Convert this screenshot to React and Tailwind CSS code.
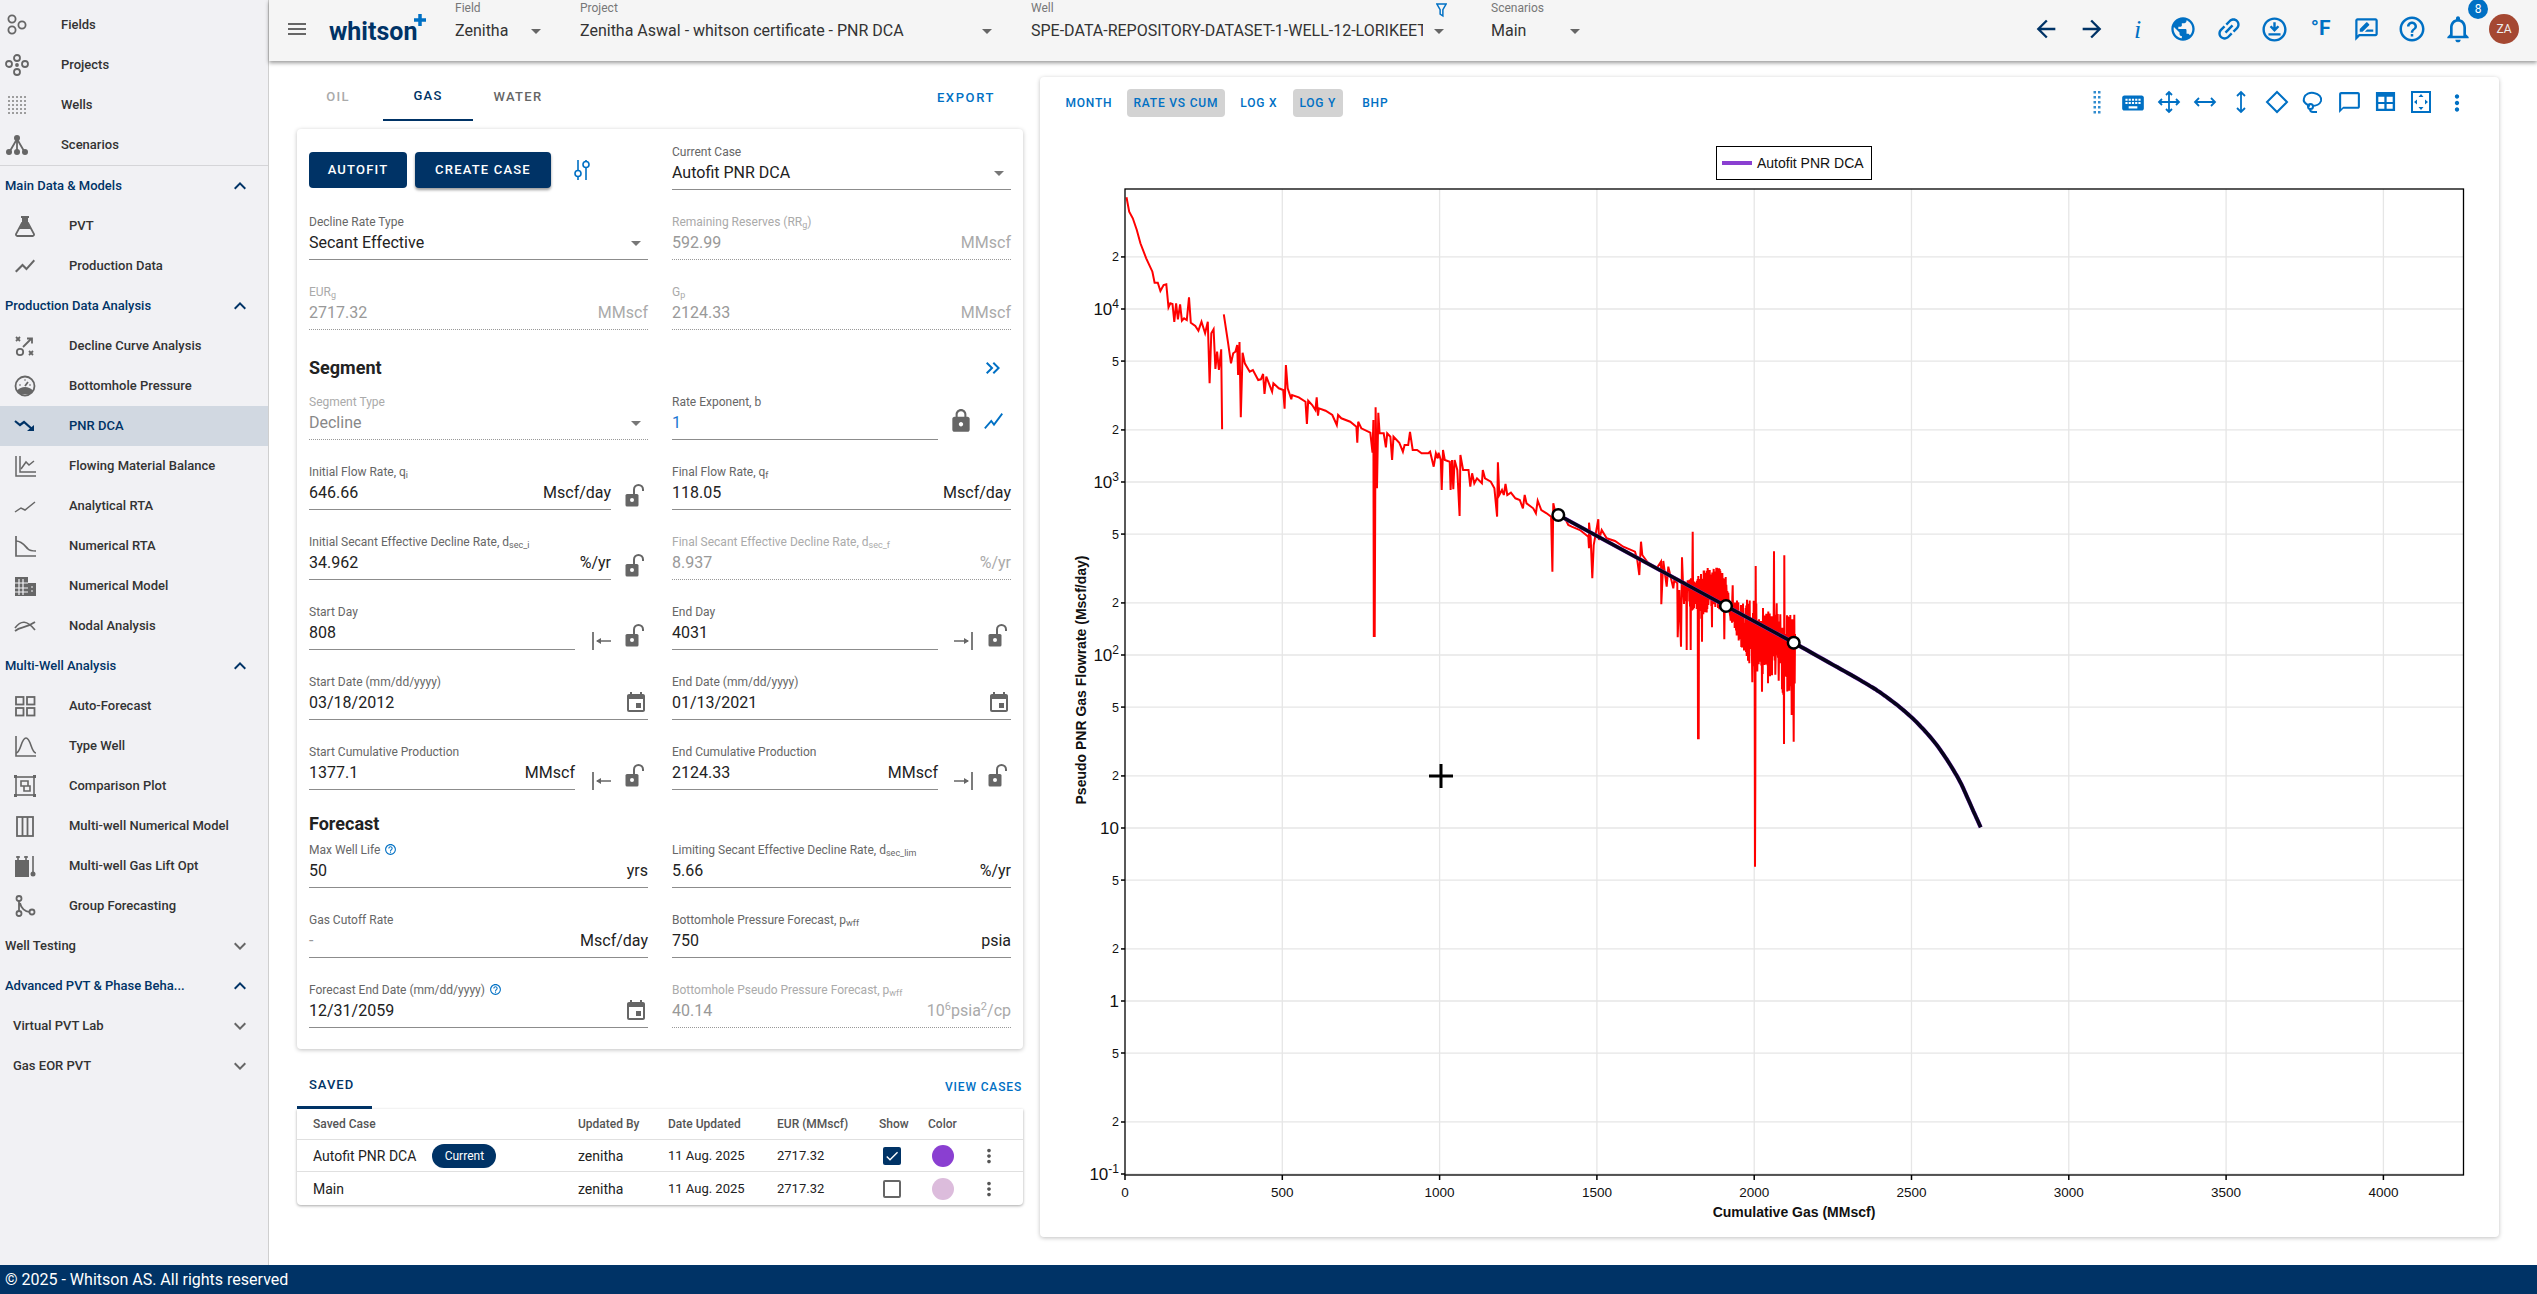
import React from "react";
import {
  MdArrowBack, MdArrowForward, MdPublic, MdLink, MdOutlineDownloadForOffline, MdOutlineRateReview,
  MdHelpOutline, MdNotificationsNone, MdMoreVert, MdKeyboard, MdChatBubbleOutline,
  MdEvent, MdLock, MdKeyboardDoubleArrowRight, MdExpandLess, MdExpandMore, MdArrowDropDown,
  MdMenu, MdShowChart, MdCheck,
} from "react-icons/md";

const Ico = ({ children, className = "" }) => (
  <svg viewBox="0 0 24 24" width="24" height="24" fill="none" stroke="currentColor" strokeWidth="1.8" className={className}>
    {children}
  </svg>
);

// sidebar icons
const icons = {
  fields: <Ico><circle cx="7" cy="6" r="3.6" /><circle cx="7" cy="17" r="3.6" /><circle cx="17" cy="12" r="3.6" /></Ico>,
  projects: <Ico><circle cx="12" cy="5" r="3" /><circle cx="12" cy="19" r="3" /><circle cx="4" cy="11" r="3" /><circle cx="20" cy="11" r="3" /><circle cx="12" cy="12" r="1" /></Ico>,
  wells: (
    <Ico>
      <g fill="currentColor" stroke="none" opacity="0.75">
        {[4, 8, 12, 16, 20].map((x) => [4, 8, 12, 16, 20].map((y) => <rect key={x + "-" + y} x={x - 0.9} y={y - 0.9} width="1.8" height="1.8" />))}
      </g>
    </Ico>
  ),
  scenarios: (
    <Ico>
      <path d="M12 6 5 18M12 6l7 12M12 6v12" />
      <g fill="currentColor" stroke="none"><circle cx="12" cy="5" r="3" /><circle cx="4" cy="19" r="3" /><circle cx="12" cy="19" r="3" /><circle cx="20" cy="19" r="3" /></g>
    </Ico>
  ),
  pvt: (
    <Ico>
      <path d="M9 9 3 20a1.500 1.500 0 0 0 1.300 2h15.400a1.500 1.500 0 0 0 1.300-2L15 9z" />
      <path d="M8 2h8v2h-1v6l3 5H6l3-5V4H8z" fill="currentColor" stroke="none" />
    </Ico>
  ),
  prod: <MdShowChart size={26} />,
  dca: (
    <Ico>
      <path d="m3 3 4 4M7 3 3 7M16 17l4 4M20 17l-4 4M10 13l8-8M14 4.500h5v5" />
      <circle cx="7" cy="18" r="3.2" />
    </Ico>
  ),
  bhp: (
    <Ico>
      <circle cx="12" cy="12" r="9.500" />
      <path d="M4 17c2-3 5-4 8-4s6 1 8 4l-3 3H7z" fill="currentColor" stroke="none" />
      <path d="m12 12 3-4M6.500 11h1M16.500 11h1M12 5.500v1" />
    </Ico>
  ),
  pnr: <Ico><path d="m2 7 5 4 4-3 8 7" strokeWidth="2.2" /><path d="M14 17h7v-6z" fill="currentColor" stroke="none" /></Ico>,
  fmb: <Ico><path d="M3 2v20h20M7 2v16h16" strokeWidth="1.5" /><path d="m8 15 5-7 3 3 5-4" strokeWidth="1.5" /></Ico>,
  art: <Ico><path d="m2 18 6-4 4 2 10-8" strokeWidth="1.5" /></Ico>,
  nrta: <Ico><path d="M3 2v20h20" strokeWidth="1.7" /><path d="M3 7c6 0 9 5 12 8 2 2 5 2 8 2" strokeWidth="1.7" /></Ico>,
  model: (
    <Ico>
      <path d="M2 3h13v19H2zM15 9h8v13h-8z" fill="currentColor" stroke="none" />
      <path d="M6 5v16M10 5v16M2 9h13M2 14h13M2 18h13M18 13h2M18 17h2" stroke="#f1f1f4" strokeWidth="1.2" />
    </Ico>
  ),
  nodal: <Ico><path d="M2 14c6-8 12-8 20 2M2 17c6-5 10-2 20-9" strokeWidth="1.7" /></Ico>,
  auto: <Ico><rect x="3" y="3" width="7.500" height="7.500" /><rect x="14" y="3" width="7.500" height="7.500" /><rect x="3" y="14" width="7.500" height="7.500" /><rect x="14" y="14" width="7.500" height="7.500" /></Ico>,
  type: <Ico><path d="M3 2v20h20" strokeWidth="1.6" /><path d="M3 19c5 0 5-15 10-15s5 15 10 15" strokeWidth="1.6" /></Ico>,
  comp: (
    <Ico>
      <rect x="3" y="3" width="18" height="18" strokeWidth="1.6" />
      <path d="M8 7h7v5H8zM11 12h6v5h-6z" strokeWidth="1.6" />
      <g fill="currentColor" stroke="none"><rect x="1" y="1" width="3" height="3" /><rect x="20" y="1" width="3" height="3" /><rect x="1" y="20" width="3" height="3" /><rect x="20" y="20" width="3" height="3" /></g>
    </Ico>
  ),
  mwnm: <Ico><rect x="4" y="3" width="16" height="19" /><path d="M9.500 3v19M14.500 3v19" /></Ico>,
  gaslift: (
    <Ico>
      <path d="M2 6h14v17H2z" fill="currentColor" stroke="none" />
      <path d="M5 2v5M13 2v5M3 3h4M11 3h4M20 2v16" strokeWidth="1.6" />
      <circle cx="20" cy="20" r="2.500" fill="currentColor" stroke="none" />
    </Ico>
  ),
  group: <Ico><circle cx="6" cy="4.500" r="2.500" /><circle cx="6" cy="19.500" r="2.500" /><circle cx="19" cy="18" r="2.500" /><path d="M6 7v10M7 9c1 5 5 9 10 9" /></Ico>,
};

const Nav = ({ icon, label, sub, active }) => (
  <div className={`flex h-10 items-center ${sub ? "pl-[13px]" : "pl-[5px]"} ${active ? "bg-[#d1d8e1] text-[#003366]" : "text-[#333]"}`}>
    <span className={`flex w-6 justify-center ${active ? "text-[#003366]" : "text-[#666]"}`}>{icons[icon]}</span>
    <span className="ml-8 text-[13px] font-medium whitespace-nowrap">{label}</span>
  </div>
);

const Group = ({ label, open, inset }) => (
  <div className={`flex h-10 items-center justify-between pr-4 ${inset ? "pl-[13px]" : "pl-[5px]"} ${open ? "text-[#003366]" : "text-[#333]"}`}>
    <span className="text-[13px] font-medium whitespace-nowrap">{label}</span>
    {open ? <MdExpandLess size={24} className="text-[#003366]" /> : <MdExpandMore size={24} className="text-[#666]" />}
  </div>
);

function Sidebar() {
  return (
    <div className="h-full w-[269px] shrink-0 border-r border-[#cfcfcf] bg-[#f1f1f4] pt-[5px]">
      <Nav icon="fields" label="Fields" />
      <Nav icon="projects" label="Projects" />
      <Nav icon="wells" label="Wells" />
      <Nav icon="scenarios" label="Scenarios" />
      <div className="border-t border-[#d5d5d8]" />
      <Group label="Main Data & Models" open />
      <Nav sub icon="pvt" label="PVT" />
      <Nav sub icon="prod" label="Production Data" />
      <Group label="Production Data Analysis" open />
      <Nav sub icon="dca" label="Decline Curve Analysis" />
      <Nav sub icon="bhp" label="Bottomhole Pressure" />
      <Nav sub active icon="pnr" label="PNR DCA" />
      <Nav sub icon="fmb" label="Flowing Material Balance" />
      <Nav sub icon="art" label="Analytical RTA" />
      <Nav sub icon="nrta" label="Numerical RTA" />
      <Nav sub icon="model" label="Numerical Model" />
      <Nav sub icon="nodal" label="Nodal Analysis" />
      <Group label="Multi-Well Analysis" open />
      <Nav sub icon="auto" label="Auto-Forecast" />
      <Nav sub icon="type" label="Type Well" />
      <Nav sub icon="comp" label="Comparison Plot" />
      <Nav sub icon="mwnm" label="Multi-well Numerical Model" />
      <Nav sub icon="gaslift" label="Multi-well Gas Lift Opt" />
      <Nav sub icon="group" label="Group Forecasting" />
      <Group label="Well Testing" />
      <Group label="Advanced PVT & Phase Beha..." open />
      <Group inset label="Virtual PVT Lab" />
      <Group inset label="Gas EOR PVT" />
    </div>
  );
}

const TopSelect = ({ label, value, width }) => (
  <div className={`shrink-0 ${width}`}>
    <div className="h-4 text-xs leading-4 text-[#777]">{label}</div>
    <div className="mt-[3px] flex h-6 items-center text-[#333]">
      <span className="flex-1 overflow-hidden text-base whitespace-nowrap">{value}</span>
      <MdArrowDropDown size={24} className="ml-1 shrink-0 text-[#666]" />
    </div>
  </div>
);

const TopIcon = ({ children, dark }) => (
  <span className={`flex h-8 w-[45.800px] items-center justify-center ${dark ? "text-[#003366]" : "text-[#0070c4]"}`}>{children}</span>
);

function TopBar() {
  return (
    <div className="relative z-10 flex h-[61px] shrink-0 bg-[#f5f5f5] shadow-[0_2px_4px_rgba(0,0,0,0.4)]">
      <MdMenu size={24} className="mt-[17px] ml-[16px] shrink-0 text-[#666]" />
      <div className="relative mt-[16px] ml-[20px] w-[106px] shrink-0 text-[25px] leading-8 font-bold text-[#003366]">
        whitson
        <svg viewBox="0 0 12 12" width="12" height="12" className="absolute top-[-2px] left-[85px]">
          <path d="M4.250 0h3.500v4.250H12v3.500H7.750V12h-3.500V7.750H0v-3.500h4.250z" fill="#0070c4" />
        </svg>
      </div>
      <div className="ml-[20px] flex gap-8 pt-0">
        <TopSelect label="Field" value="Zenitha" width="w-[93px]" />
        <TopSelect label="Project" value="Zenitha Aswal - whitson certificate - PNR DCA" width="w-[419px]" />
        <div className="relative">
          <TopSelect label="Well" value="SPE-DATA-REPOSITORY-DATASET-1-WELL-12-LORIKEET" width="w-[420px]" />
          <svg viewBox="0 0 12 16" width="11" height="15" className="absolute top-[3px] left-[405px]" fill="none" stroke="#0070c4" strokeWidth="1.6">
            <path d="M1 1h10L7.500 7v7l-3-2V7z" />
          </svg>
        </div>
        <div className="ml-2"><TopSelect label="Scenarios" value="Main" width="w-[96px]" /></div>
      </div>
      <div className="ml-auto flex items-start pt-[13px] pr-[18px]">
        <TopIcon dark><MdArrowBack size={28} /></TopIcon>
        <TopIcon dark><MdArrowForward size={28} /></TopIcon>
        <TopIcon><span className="font-['Liberation_Serif'] text-[26px] italic">i</span></TopIcon>
        <TopIcon><MdPublic size={28} /></TopIcon>
        <TopIcon><MdLink size={30} className="-rotate-45" /></TopIcon>
        <TopIcon><MdOutlineDownloadForOffline size={29} /></TopIcon>
        <TopIcon><span className="text-[21px] font-bold">°F</span></TopIcon>
        <TopIcon><MdOutlineRateReview size={27} /></TopIcon>
        <TopIcon><MdHelpOutline size={30} /></TopIcon>
        <span className="relative">
          <TopIcon><MdNotificationsNone size={32} /></TopIcon>
          <span className="absolute top-[-14px] left-[33px] flex h-5 w-5 items-center justify-center rounded-full bg-[#0070c4] text-xs text-white">8</span>
        </span>
        <span className="mt-[1px] ml-2 flex h-[30px] w-[30px] items-center justify-center rounded-full bg-[#a54832] text-xs text-[#eee]">ZA</span>
      </div>
    </div>
  );
}

// shackle swings out to the right, like the app's unlocked icon
const OpenLock = () => (
  <svg viewBox="0 0 24 24" width="24" height="24" className="text-[#666]">
    <path d="M5 11h10a1.500 1.500 0 0 1 1.500 1.500V22a1.500 1.500 0 0 1-1.500 1.500H5A1.500 1.500 0 0 1 3.500 22v-9.500A1.500 1.500 0 0 1 5 11z" fill="currentColor" />
    <circle cx="10" cy="17" r="2" fill="#fff" />
    <path d="M12 11V6.500a4.500 4.500 0 0 1 9 0V8" fill="none" stroke="currentColor" strokeWidth="2" />
  </svg>
);

const ToStart = () => (
  <svg viewBox="0 0 24 24" width="24" height="24" fill="none" stroke="#666" strokeWidth="1.7">
    <path d="M4 3v18M22 12H8" />
    <path d="M12 9 7 12l5 3z" fill="#666" stroke="none" />
  </svg>
);
const ToEnd = () => (
  <svg viewBox="0 0 24 24" width="24" height="24" fill="none" stroke="#666" strokeWidth="1.7">
    <path d="M20 3v18M2 12h14" />
    <path d="m12 9 5 3-5 3z" fill="#666" stroke="none" />
  </svg>
);

const Hint = () => <MdHelpOutline size={13} className="ml-1 inline-block -translate-y-[1px] text-[#0070c4]" />;

function Field({ label, value, unit, off, select, date, arrow, lock, dim, blue, trend }) {
  return (
    <div className="mb-6 flex h-[46px] w-[339px]">
      <div className="min-w-0 flex-1">
        <div className={`h-4 text-xs leading-4 whitespace-nowrap ${off ? "text-[#aaa]" : "text-[#666]"}`}>{label}</div>
        <div className={`flex h-[30px] items-center border-b pb-1 text-base ${off ? "border-dotted border-[#999] text-[#999]" : "border-[#8c8c8c] text-[#222]"}`}>
          <span className={`flex-1 ${blue ? "text-[#1976d2]" : ""} ${dim ? "text-[#999]" : ""} ${off && select ? "text-[#888]" : ""}`}>{value}</span>
          {unit && <span className={off ? "text-[#aaa]" : ""}>{unit}</span>}
          {select && <MdArrowDropDown size={24} className="text-[#777]" />}
          {date && <MdEvent size={24} className="text-[#666]" />}
        </div>
      </div>
      {trend ? (
        <div className="flex items-end pr-[6px] pb-[6px]">
          <MdLock size={26} className="ml-[10px] text-[#666]" />
          <svg viewBox="0 0 24 24" width="22" height="22" fill="none" stroke="#0070c4" strokeWidth="2" className="mb-[2px] ml-[9px]">
            <path d="m2 20 7-8 3 4 9-12" />
          </svg>
        </div>
      ) : arrow ? (
        <div className="flex items-end pr-[2px]">
          <span className="mb-[-3px] ml-[14px]">{arrow === "start" ? <ToStart /> : <ToEnd />}</span>
          <span className="mb-[3px] ml-[9px]"><OpenLock /></span>
        </div>
      ) : lock ? (
        <div className="flex items-end pr-[2px]">
          <span className="mb-[3px] ml-[11px]"><OpenLock /></span>
        </div>
      ) : null}
    </div>
  );
}

const S = ({ children }) => <sub className="text-[9px]">{children}</sub>;

function FitCard() {
  return (
    <div className="rounded bg-white px-3 pt-[15px] pb-[21px] shadow-[0_1px_4px_rgba(0,0,0,0.25)]">
      <div className="flex gap-6">
        <div className="mb-6 flex h-[46px] w-[339px] items-start gap-2 pt-2">
          <button className="h-9 w-[98px] rounded bg-[#003366] text-[13px] font-medium tracking-[1.2px] text-white">AUTOFIT</button>
          <button className="h-9 w-[136px] rounded bg-[#003366] text-[13px] font-medium tracking-[1.2px] text-white shadow-[0_2px_3px_rgba(0,0,0,0.4)]">CREATE CASE</button>
          <svg viewBox="0 0 20 24" width="20" height="24" fill="none" stroke="#0070c4" strokeWidth="1.6" className="mt-[6px] ml-[13px]">
            <path d="M6 2v10M6 19v3M14 2v1M14 10v12" />
            <circle cx="6" cy="15.500" r="3" />
            <circle cx="14" cy="6.500" r="3" />
          </svg>
        </div>
        <Field label="Current Case" value="Autofit PNR DCA" select />
      </div>
      <div className="grid grid-cols-[339px_339px] gap-x-6">
        <Field label="Decline Rate Type" value="Secant Effective" select />
        <Field off label={<>Remaining Reserves (RR<S>g</S>)</>} value="592.99" unit="MMscf" />
        <Field off label={<>EUR<S>g</S></>} value="2717.32" unit="MMscf" />
        <Field off label={<>G<S>p</S></>} value="2124.33" unit="MMscf" />
      </div>
      <div className="flex h-7 items-center justify-between">
        <span className="text-lg font-bold text-[#222]">Segment</span>
        <MdKeyboardDoubleArrowRight size={24} className="mr-[6px] text-[#0070c4]" />
      </div>
      <div className="mt-3 grid grid-cols-[339px_339px] gap-x-6">
        <Field off select label="Segment Type" value="Decline" />
        <Field trend blue label="Rate Exponent, b" value="1" />
        <Field lock label={<>Initial Flow Rate, q<S>i</S></>} value="646.66" unit="Mscf/day" />
        <Field label={<>Final Flow Rate, q<S>f</S></>} value="118.05" unit="Mscf/day" />
        <Field lock label={<>Initial Secant Effective Decline Rate, d<S>sec_i</S></>} value="34.962" unit="%/yr" />
        <Field off label={<>Final Secant Effective Decline Rate, d<S>sec_f</S></>} value="8.937" unit="%/yr" />
        <Field arrow="start" label="Start Day" value="808" />
        <Field arrow="end" label="End Day" value="4031" />
        <Field date label="Start Date (mm/dd/yyyy)" value="03/18/2012" />
        <Field date label="End Date (mm/dd/yyyy)" value="01/13/2021" />
        <Field arrow="start" label="Start Cumulative Production" value="1377.1" unit="MMscf" />
        <Field arrow="end" label="End Cumulative Production" value="2124.33" unit="MMscf" />
      </div>
      <div className="mb-2 flex h-5 items-center text-lg font-bold text-[#222]">Forecast</div>
      <div className="grid grid-cols-[339px_339px] gap-x-6">
        <Field label={<>Max Well Life<Hint /></>} value="50" unit="yrs" />
        <Field label={<>Limiting Secant Effective Decline Rate, d<S>sec_lim</S></>} value="5.66" unit="%/yr" />
        <Field dim label="Gas Cutoff Rate" value="-" unit="Mscf/day" />
        <Field label={<>Bottomhole Pressure Forecast, p<S>wff</S></>} value="750" unit="psia" />
        <div className="-mb-6"><Field date label={<>Forecast End Date (mm/dd/yyyy)<Hint /></>} value="12/31/2059" /></div>
        <div className="-mb-6">
          <Field off label={<>Bottomhole Pseudo Pressure Forecast, p<S>wff</S></>} value="40.14" unit={<>10<sup className="text-[11px]">6</sup>psia<sup className="text-[11px]">2</sup>/cp</>} />
        </div>
      </div>
    </div>
  );
}

const tableCols = "grid grid-cols-[281px_90px_109px_102px_49px_50px_1fr] items-center";

function SavedRow({ name, current, on, color, tall }) {
  return (
    <div className={`${tableCols} ${tall ? "h-[33px]" : "h-8 border-b border-[#e0e0e0]"} text-[#222]`}>
      <div className="flex items-center pl-4 text-sm">
        {name}
        {current && <span className="ml-4 flex h-6 w-16 items-center justify-center rounded-full bg-[#003366] text-xs text-white">Current</span>}
      </div>
      <div className="text-sm">zenitha</div>
      <div className="text-[13px]">11 Aug. 2025</div>
      <div className="text-[13px]">2717.32</div>
      <div className="pl-1">
        {on ? (
          <span className="flex h-[18px] w-[18px] items-center justify-center rounded-[2px] bg-[#003366] text-white"><MdCheck size={16} /></span>
        ) : (
          <span className="block h-[18px] w-[18px] rounded-[2px] border-2 border-[#666]" />
        )}
      </div>
      <div className="pl-1"><span className={`block h-[22px] w-[22px] rounded-full ${color}`} /></div>
      <div className="text-[#555]"><MdMoreVert size={22} /></div>
    </div>
  );
}

function SavedTable() {
  return (
    <>
      <div className="mt-3 flex h-12 items-end justify-between">
        <div className="flex h-12 w-[75px] items-center border-b-[3px] border-[#003366] pt-[3px] pl-3 text-[13px] font-medium tracking-[1px] text-[#003366]">SAVED</div>
        <div className="mr-[1px] mb-[14px] text-xs font-medium tracking-[0.85px] text-[#0070c4]">VIEW CASES</div>
      </div>
      <div className="rounded-b bg-white shadow-[0_1px_3px_rgba(0,0,0,0.35)]">
        <div className={`${tableCols} h-[31px] border-b border-[#e0e0e0] text-xs font-medium text-[#555]`}>
          <div className="pl-4">Saved Case</div>
          <div>Updated By</div>
          <div>Date Updated</div>
          <div>EUR (MMscf)</div>
          <div>Show</div>
          <div>Color</div>
          <div />
        </div>
        <SavedRow current on name="Autofit PNR DCA" color="bg-[#8a3fd1]" />
        <SavedRow tall name="Main" color="bg-[#dcbcdc]" />
      </div>
    </>
  );
}

// chart scales, in page pixels
const X = (v) => 1125 + v * 0.3146;
const Y = (lg) => 309 + (4 - lg) * 173;

// traced from the plot
const upper = [[149,82],[155,125],[163,145],[172,180],[180,220],[193,265],[207,305],[212,338],[219,338],[225,363],[232,345],[238,343],[243,412],[247,400],[252,402],[256,456],[260,400],[264,448],[269,403],[273,452],[278,445],[284,450],[289,382],[293,458],[303,468],[310,482],[317,455],[325,490],[331,455],[335,640],[339,490],[344,478],[348,597],[352,545],[356,600],[361,538],[363,778]];
const middle = [[367,433],[376,515],[383,580],[388,550],[393,545],[397,525],[399,615],[402,516],[405,742],[409,548],[414,580],[425,605],[432,600],[444,630],[450,628],[455,612],[458,672],[462,620],[468,640],[475,665],[478,640],[490,655],[500,660],[503,716],[506,585],[510,655],[518,688],[520,675],[535,682],[550,695],[553,762],[556,692],[565,705],[572,720],[575,682],[578,737],[580,715],[595,722],[610,735],[620,765],[623,735],[630,745],[650,755],[664,770],[666,818],[668,755],[675,775],[695,788],[700,848],[702,750],[703,1398],[705,1398],[707,712],[710,955],[713,728],[716,790],[725,790],[730,832],[733,790],[740,800],[744,870],[747,800],[760,818],[768,845],[772,825],[780,825],[784,786],[790,840],[800,840],[810,850],[825,850],[829,845],[837,890],[842,850],[846,865],[848,848],[853,870],[855,960],[858,840],[862,870],[873,875],[875,960],[878,870],[881,958],[884,870],[890,900],[895,1038],[897,855],[903,900],[915,900],[919,950],[923,910],[928,940],[934,925],[945,940],[947,900],[952,925],[965,935],[973,955],[979,1040],[981,877],[984,975],[990,960],[994,975],[998,942],[1002,975],[1010,968],[1020,985],[1030,990],[1037,1015],[1041,975],[1045,1000],[1060,1015],[1066,1030],[1070,992],[1078,1020],[1090,1030],[1100,1040],[1103,1205],[1105,1000],[1110,1030],[1117,1035]];
const lower = [[175,105],[195,115],[205,135],[215,140],[240,150],[265,170],[267,205],[267,128],[272,175],[277,295],[281,195],[295,118],[297,180],[305,150],[320,175],[345,183],[370,200],[405,215],[412,240],[418,285],[423,185],[427,225],[445,250],[470,265],[483,245],[484,373],[490,243],[500,320],[505,260],[520,325],[523,300],[532,310],[533,472],[538,330],[543,500],[546,232],[550,335]];

const lerp = (tbl, p) => {
  for (let i = 1; i < tbl.length; i++) {
    if (p <= tbl[i][0]) {
      const t = (p - tbl[i - 1][0]) / (tbl[i][0] - tbl[i - 1][0]);
      return tbl[i - 1][1] + t * (tbl[i][1] - tbl[i - 1][1]);
    }
  }
  return tbl[tbl.length - 1][1];
};
const noiseTop = [[550,300],[600,285],[620,260],[650,255],[680,295],[690,340],[720,370],[750,350],[780,380],[830,400],[885,405]];
const noiseBottom = [[550,370],[600,420],[640,380],[680,400],[700,440],[730,520],[760,570],[800,590],[830,590],[850,650],[885,620]];
const spikes = { 560: 510, 572: 510, 578: 155, 594: 778, 596: 778, 606: 485, 636: 442, 673: 478, 698: 316, 757: 607, 765: 1160, 766: 920, 767: 258, 786: 635, 804: 610, 822: 214, 830: 370, 852: 792, 853: 226, 875: 705, 881: 785, 883: 404 };

let seed = 7;
const rnd = () => {
  seed = (seed * 16807) % 2147483647;
  return seed / 2147483647;
};
const noisy = [];
for (let p = 552; p <= 885; p += 1) {
  const a = lerp(noiseTop, p);
  const b = lerp(noiseBottom, p);
  // rough envelope, so the band doesn't read as a clean stripe
  let y = p % 2 ? a + rnd() * rnd() * 0.9 * (b - a) : b - rnd() * rnd() * 0.9 * (b - a);
  if (spikes[p]) y = spikes[p];
  noisy.push([p, y]);
}

const fromUpper = ([x, y]) => `${(1060 + x / 2.24).toFixed(1)},${(170 + y / 3).toFixed(1)}`;
const fromLower = ([x, y]) => `${(1500 + x / 3).toFixed(1)},${(480 + y / 3).toFixed(1)}`;
const redA = upper.map(fromUpper).join(" ");
const redB = middle.map(fromUpper).concat(lower.map(fromLower), noisy.map(fromLower)).join(" ");

// straight to the last marker, then a catmull-rom through the traced tail
const tail = [[881,488],[1000,555],[1080,600],[1140,637],[1200,682],[1250,727],[1300,782],[1340,838],[1380,905],[1412,975],[1442,1042]];
const smooth = [];
tail.forEach((p, i) => {
  if (i === tail.length - 1) return;
  const p0 = tail[i - 1] || p;
  const p1 = tail[i + 1];
  const p2 = tail[i + 2] || p1;
  for (let k = 0; k < 8; k++) {
    const t = k / 8;
    const f = (a, b, c, d) => 0.5 * (2 * b + (c - a) * t + (2 * a - 5 * b + 4 * c - d) * t * t + (3 * b - a - 3 * c + d) * t * t * t);
    smooth.push([f(p0[0], p[0], p1[0], p2[0]), f(p0[1], p[1], p1[1], p2[1])]);
  }
});
const fit = [[175,105],[678,378]].concat(smooth, [[1442,1042]]).map(fromLower).join(" ");

const decades = [4, 3, 2, 1, 0, -1];
const gridY = [];
decades.forEach((d) => {
  gridY.push({ y: Y(d), big: d });
  if (d > -1) {
    gridY.push({ y: Y(d + Math.log10(0.5)), small: "5" });
    gridY.push({ y: Y(d + Math.log10(0.2)), small: "2" });
  }
});
gridY.push({ y: Y(4 + Math.log10(2)), small: "2" });

function Chart() {
  return (
    <svg viewBox="1040 130 1459 1107" width="1459" height="1107" className="block" fontFamily="'Liberation Sans', Arial, sans-serif">
      <rect x="1716.500" y="146.500" width="155" height="33" fill="#fff" stroke="#000" />
      <rect x="1722" y="161" width="30" height="4" fill="#8a3fd1" />
      <text x="1757" y="168" fontSize="14" fill="#111">Autofit PNR DCA</text>

      {gridY.map((g, i) => (
        <line key={i} x1="1125" x2="2463" y1={g.y} y2={g.y} stroke="#e6e6e6" strokeWidth="1.300" />
      ))}
      {[500, 1000, 1500, 2000, 2500, 3000, 3500, 4000].map((v) => (
        <line key={v} x1={X(v)} x2={X(v)} y1="189" y2="1175" stroke="#e6e6e6" strokeWidth="1.300" />
      ))}

      <polyline points={redA} fill="none" stroke="#ff0000" strokeWidth="2" />
      <polyline points={redB} fill="none" stroke="#ff0000" strokeWidth="2" />
      <polyline points={fit} fill="none" stroke="#8a3fd1" strokeWidth="4.200" />
      <polyline points={fit} fill="none" stroke="#07051a" strokeWidth="3.600" />
      {[[1558.3, 515], [1726, 606], [1793.700, 642.700]].map(([cx, cy]) => (
        <circle key={cx} cx={cx} cy={cy} r="5.800" fill="#fff" stroke="#000" strokeWidth="2.500" />
      ))}

      <rect x="1125" y="189" width="1338.500" height="986" fill="none" stroke="#000" strokeWidth="1.300" />

      {gridY.map((g, i) => (
        <g key={i}>
          <line x1="1121" x2="1125" y1={g.y} y2={g.y} stroke="#000" strokeWidth="1.500" />
          {g.small ? (
            <text x="1119" y={g.y + 4.500} fontSize="12.500" textAnchor="end" fill="#111">{g.small}</text>
          ) : g.big === 0 ? (
            <text x="1119" y={g.y + 6} fontSize="17" textAnchor="end" fill="#111">1</text>
          ) : g.big === 1 ? (
            <text x="1119" y={g.y + 6} fontSize="17" textAnchor="end" fill="#111">10</text>
          ) : (
            <text x="1119" y={g.y + 6} fontSize="17" textAnchor="end" fill="#111">
              10<tspan dy="-7" fontSize="12">{g.big}</tspan>
            </text>
          )}
        </g>
      ))}
      {[0, 500, 1000, 1500, 2000, 2500, 3000, 3500, 4000].map((v) => (
        <g key={v}>
          <line x1={X(v)} x2={X(v)} y1="1175" y2="1180" stroke="#000" strokeWidth="1.500" />
          <text x={X(v)} y="1197" fontSize="13.500" textAnchor="middle" fill="#111">{v}</text>
        </g>
      ))}
      <text x="1794" y="1217" fontSize="14" fontWeight="700" textAnchor="middle" fill="#111">Cumulative Gas (MMscf)</text>
      <text transform="translate(1086 680) rotate(-90)" fontSize="14" fontWeight="700" textAnchor="middle" fill="#111">Pseudo PNR Gas Flowrate (Mscf/day)</text>

      <path d="M1429 776h24M1441 764v24" stroke="#000" strokeWidth="3" fill="none" />
    </svg>
  );
}

const ChartBtn = ({ children, on, className = "" }) => (
  <span className={`flex h-7 items-center rounded px-[6.500px] text-xs font-medium tracking-[0.8px] whitespace-nowrap text-[#0070c4] ${on ? "bg-[#d3d3d3]" : ""} ${className}`}>{children}</span>
);

const ToolIcon = ({ children }) => <span className="flex w-9 justify-center text-[#0070c4]">{children}</span>;

const ToolLine = ({ d }) => (
  <svg viewBox="0 0 24 24" width="24" height="24" fill="none" stroke="currentColor" strokeWidth="1.800"><path d={d} /></svg>
);

function ChartCard() {
  return (
    <div className="mt-4 h-[1160px] w-[1459px] shrink-0 overflow-hidden rounded bg-white shadow-[0_1px_4px_rgba(0,0,0,0.25)]">
      <div className="flex h-[53px] items-center pr-6 pb-[2px] pl-[19px]">
        <div className="flex gap-2">
          <ChartBtn>MONTH</ChartBtn>
          <ChartBtn on>RATE VS CUM</ChartBtn>
          <ChartBtn className="ml-[1px]">LOG X</ChartBtn>
          <ChartBtn on className="ml-[1px]">LOG Y</ChartBtn>
          <ChartBtn className="ml-[5px]">BHP</ChartBtn>
        </div>
        <div className="ml-auto flex">
          <ToolIcon>
            <svg viewBox="0 0 24 24" width="24" height="24" fill="currentColor" opacity="0.8">
              {[1, 6, 11, 16, 21].map((y) => <g key={y}><rect x="8.500" y={y} width="2.500" height="2.500" /><rect x="13" y={y} width="2.500" height="2.500" /></g>)}
            </svg>
          </ToolIcon>
          <ToolIcon><MdKeyboard size={26} /></ToolIcon>
          <ToolIcon><ToolLine d="M12 2v20M2 12h20M9 5l3-3 3 3M9 19l3 3 3-3M5 9l-3 3 3 3M19 9l3 3-3 3" /></ToolIcon>
          <ToolIcon><ToolLine d="M2 12h20M6 8l-4 4 4 4M18 8l4 4-4 4" /></ToolIcon>
          <ToolIcon><ToolLine d="M12 2v20M8 6l4-4 4 4M8 18l4 4 4-4" /></ToolIcon>
          <ToolIcon>
            <svg viewBox="0 0 24 24" width="24" height="24" fill="none" stroke="currentColor" strokeWidth="2"><path d="M12 2 22 12 12 22 2 12z" /></svg>
          </ToolIcon>
          <ToolIcon>
            <svg viewBox="0 0 24 24" width="24" height="24" fill="none" stroke="currentColor" strokeWidth="2">
              <path d="M9 16C4 14 2 11 3 8c1-4 6-6 10-5 5 1 8 4 7 8-1 3-5 5-9 5" />
              <circle cx="9.500" cy="16.500" r="2.500" />
              <path d="M9 19c0 2 1 3 3 3h4" />
            </svg>
          </ToolIcon>
          <ToolIcon><MdChatBubbleOutline size={25} /></ToolIcon>
          <ToolIcon>
            <svg viewBox="0 0 24 24" width="23" height="23" fill="currentColor">
              <path d="M2 2h20v20H2zm2.500 5v5.500h6.300V7zm8.700 0v5.500h6.300V7zM4.500 14.500v5h6.300v-5zm8.700 0v5h6.300v-5z" fillRule="evenodd" />
            </svg>
          </ToolIcon>
          <ToolIcon>
            <svg viewBox="0 0 24 24" width="24" height="24" fill="currentColor">
              <path d="M2 1h20v22H2zm2 2v18h16V3z" fillRule="evenodd" />
              <path d="m12 4 2.500 3h-5zm0 16-2.500-3h5zM5 12l3-2.500v5zm14 0-3 2.500v-5z" />
            </svg>
          </ToolIcon>
          <ToolIcon><MdMoreVert size={26} /></ToolIcon>
        </div>
      </div>
      <Chart />
    </div>
  );
}

export default function App() {
  return (
    <div className="flex h-[1294px] w-[2537px] flex-col overflow-hidden bg-white font-['Roboto',sans-serif]">
      <div className="flex min-h-0 flex-1">
        <Sidebar />
        <div className="flex min-w-0 flex-1 flex-col">
          <TopBar />
          <div className="flex flex-1 pl-[28px]">
            <div className="w-[726px] shrink-0">
              <div className="-ml-1 flex h-[60px] items-start pt-3">
                <div className="flex h-12 w-[90px] items-center justify-center text-[13px] font-medium tracking-[1.3px] text-[#aaa]">OIL</div>
                <div className="flex h-12 w-[90px] items-center justify-center border-b-2 border-[#003366] text-[13px] font-medium tracking-[1.3px] text-[#003366]">GAS</div>
                <div className="flex h-12 w-[90px] items-center justify-center text-[13px] font-medium tracking-[1.3px] text-[#666]">WATER</div>
                <div className="mt-[15px] mr-[28px] ml-auto text-[13px] font-medium tracking-[1.6px] text-[#0070c4]">EXPORT</div>
              </div>
              <div className="mt-2"><FitCard /></div>
              <SavedTable />
            </div>
            <div className="ml-[17px]"><ChartCard /></div>
          </div>
        </div>
      </div>
      <div className="flex h-[29px] shrink-0 items-center bg-[#003366] pl-[5px] text-base text-white">© 2025 - Whitson AS. All rights reserved</div>
    </div>
  );
}
